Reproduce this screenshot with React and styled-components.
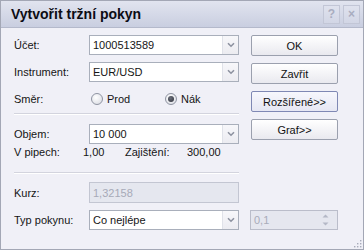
import React, { useState } from "react";
import styled, { createGlobalStyle } from "styled-components";

const GlobalStyle = createGlobalStyle`
  html, body {
    margin: 0;
    padding: 0;
    background: #f0f0f7;
  }
  * {
    box-sizing: border-box;
  }
`;

const Chevron = () => (
  <svg width="8" height="6" viewBox="0 0 8 6">
    <path d="M1 1.2 L4 4.2 L7 1.2" fill="none" stroke="#8d92a0" strokeWidth="1.6" />
  </svg>
);

const SpinArrows = () => (
  <svg width="7" height="14" viewBox="0 0 7 14">
    <path d="M0.5 4.5 L3.5 1.5 L6.5 4.5 Z" fill="#b4b8c6" />
    <path d="M0.5 9.5 L3.5 12.5 L6.5 9.5 Z" fill="#b4b8c6" />
  </svg>
);

const Grip = () => (
  <svg width="9" height="9" viewBox="0 0 9 9">
    {[
      [7, 1],
      [7, 4],
      [4, 4],
      [7, 7],
      [4, 7],
      [1, 7],
    ].map(([x, y]) => (
      <rect key={`${x}-${y}`} x={x} y={y} width="1.4" height="1.4" fill="#a7abba" />
    ))}
  </svg>
);

const Combo = ({ value }) => (
  <ComboBox>
    <ComboText>{value}</ComboText>
    <ComboArrow>
      <Chevron />
    </ComboArrow>
  </ComboBox>
);

const Radio = ({ checked, label, onClick }) => (
  <RadioLabel onClick={onClick}>
    <RadioCircle $checked={checked} />
    {label}
  </RadioLabel>
);

const App = () => {
  const [side, setSide] = useState("buy");

  return (
    <>
      <GlobalStyle />
      <Window>
        <TitleBar>
          <Title>Vytvořit tržní pokyn</Title>
          <TitleButtons>
            <TitleButton>?</TitleButton>
            <TitleButton>×</TitleButton>
          </TitleButtons>
        </TitleBar>

        <Body>
          <Form>
            <Row>
              <Label>Účet:</Label>
              <Combo value="1000513589" />
            </Row>
            <Row>
              <Label>Instrument:</Label>
              <Combo value="EUR/USD" />
            </Row>
            <Row>
              <Label>Směr:</Label>
              <Radios>
                <Radio label="Prod" checked={side === "sell"} onClick={() => setSide("sell")} />
                <Radio label="Nák" checked={side === "buy"} onClick={() => setSide("buy")} />
              </Radios>
            </Row>
            <Separator $top={4} $bottom={9} />
            <Row>
              <Label>Objem:</Label>
              <Combo value="10 000" />
            </Row>
            <InfoRow>
              <Label>V pipech:</Label>
              <Value>1,00</Value>
              <Label>Zajištění:</Label>
              <Value>300,00</Value>
            </InfoRow>
            <Separator $top={12} $bottom={8} />
            <Row>
              <Label>Kurz:</Label>
              <DisabledInput>1,32158</DisabledInput>
            </Row>
          </Form>

          <ButtonColumn>
            <Button>OK</Button>
            <Button>Zavřit</Button>
            <Button $focused>Rozšířené&gt;&gt;</Button>
            <Button>Graf&gt;&gt;</Button>
          </ButtonColumn>

          <Row>
            <Label>Typ pokynu:</Label>
            <Combo value="Co nejlépe" />
          </Row>
          <SpinBox>
            <span>0,1</span>
            <SpinArrows />
          </SpinBox>
        </Body>

        <GripCorner>
          <Grip />
        </GripCorner>
      </Window>
    </>
  );
};

export default App;

const Window = styled.div`
  position: relative;
  width: 364px;
  height: 250px;
  border: 1px solid #a3a7b5;
  background: #f0f0f7;
  font-family: "Liberation Sans", Arial, sans-serif;
  font-size: 11px;
  color: #151515;
  display: flex;
  flex-direction: column;
`;

const TitleBar = styled.div`
  height: 27px;
  flex: none;
  display: flex;
  align-items: center;
  justify-content: space-between;
  padding: 0 3px 0 10px;
  background: linear-gradient(#e1e4ef, #c9cee0);
  border-bottom: 1px solid #b4b9cb;
`;

const Title = styled.div`
  font-size: 14px;
  font-weight: bold;
  color: #0c0c14;
`;

const TitleButtons = styled.div`
  display: flex;
  gap: 3px;
`;

const TitleButton = styled.div`
  width: 17px;
  height: 19px;
  display: grid;
  place-items: center;
  border: 1px solid #c2c6d6;
  background: linear-gradient(#dfe2ee, #d2d6e5);
  color: #a9adc0;
  font-weight: bold;
  font-size: 12px;
`;

const Body = styled.div`
  display: grid;
  grid-template-columns: 225px 87px;
  column-gap: 12px;
  row-gap: 8px;
  align-items: start;
  padding: 7px 0 0 13px;
`;

const Form = styled.div`
  display: flex;
  flex-direction: column;
  gap: 7px;
`;

const Row = styled.div`
  display: grid;
  grid-template-columns: 75px 150px;
  align-items: center;
  height: 20px;
`;

const Label = styled.div`
  white-space: nowrap;
`;

const Value = styled.div`
  white-space: nowrap;
`;

const ComboBox = styled.div`
  display: flex;
  height: 20px;
  border: 1px solid #a9afbb;
  background: #fff;
`;

const ComboText = styled.div`
  flex: 1;
  display: flex;
  align-items: center;
  padding-left: 3px;
`;

const ComboArrow = styled.div`
  width: 16px;
  display: grid;
  place-items: center;
  border-left: 1px solid #e0e2e9;
  background: linear-gradient(#f7f7fa, #ececf1);
`;

const Radios = styled.div`
  display: flex;
  padding-left: 2px;
`;

const RadioLabel = styled.label`
  width: 84px;
  display: flex;
  align-items: center;
  gap: 4px;
  cursor: pointer;
`;

const RadioCircle = styled.span`
  width: 12px;
  height: 12px;
  border-radius: 50%;
  border: 1px solid #8f94a2;
  background: radial-gradient(circle at 40% 35%, #ffffff, #d6d8e0);
  display: grid;
  place-items: center;

  &::after {
    content: "";
    width: 6px;
    height: 6px;
    border-radius: 50%;
    background: radial-gradient(circle at 40% 35%, #6a6e7a, #2c2f38);
    display: ${(p) => (p.$checked ? "block" : "none")};
  }
`;

const Separator = styled.div`
  height: 2px;
  border-top: 1px solid #d3d4de;
  border-bottom: 1px solid #ffffff;
  margin-top: ${(p) => p.$top - 7}px;
  margin-bottom: ${(p) => p.$bottom - 7}px;
`;

const InfoRow = styled.div`
  display: grid;
  grid-template-columns: 69px 42px 62px auto;
  align-items: center;
  height: 16px;
  margin-top: -7px;
`;

const DisabledInput = styled.div`
  height: 21px;
  display: flex;
  align-items: center;
  padding-left: 3px;
  border: 1px solid #c3c6d2;
  background: #e5e7ef;
  color: #a7aab8;
`;

const ButtonColumn = styled.div`
  display: flex;
  flex-direction: column;
  gap: 7px;
`;

const Button = styled.div`
  height: 21px;
  display: grid;
  place-items: center;
  border: 1px solid ${(p) => (p.$focused ? "#7f88b4" : "#9ba0ae")};
  border-radius: 2px;
  background: ${(p) =>
    p.$focused
      ? "linear-gradient(#f7f7fd, #e6e7f3)"
      : "linear-gradient(#ffffff, #e9e9ef)"};
  color: #111;
  cursor: pointer;
`;

const SpinBox = styled.div`
  height: 20px;
  margin-left: -1px;
  display: flex;
  align-items: center;
  justify-content: space-between;
  padding: 0 8px 0 3px;
  border: 1px solid #babdca;
  background: #e5e7ef;
  color: #a9acba;
`;

const GripCorner = styled.div`
  position: absolute;
  right: 1px;
  bottom: 1px;
  line-height: 0;
`;
